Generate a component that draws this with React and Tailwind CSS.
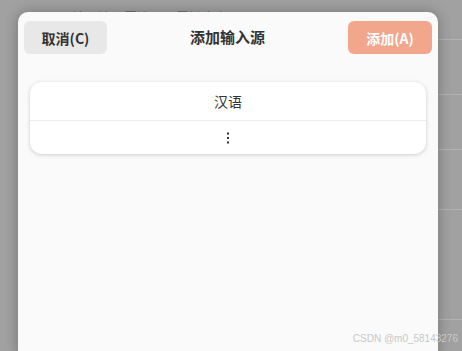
export default function App() {
  const font = { fontFamily: '"Noto Sans CJK SC", "Noto Sans", sans-serif' };
  return (
    <div className="relative w-[462px] h-[351px] overflow-hidden bg-[#a1a1a1]" style={font}>
      {/* background page behind dialog */}
      <div className="flex flex-col w-full h-full">
        <div className="h-[40px] flex">
          <div className="pl-[72px] pt-[8px] text-[13px] text-[#666] leading-[18px]">输入法设置选项配置键盘布局</div>
          <div className="flex-1 border-b border-[#b3b3b3]"></div>
        </div>
        <div className="h-[55px] ml-[430px] border-b border-[#b3b3b3]"></div>
        <div className="h-[55px] ml-[430px] border-b border-[#b3b3b3]"></div>
        <div className="h-[60px] ml-[430px] border-b border-[#b3b3b3]"></div>
        <div className="h-[110px] ml-[430px] border-b border-[#b3b3b3]"></div>
      </div>

      {/* dialog */}
      <div className="absolute left-[18px] top-[12px] w-[420px] h-[345px] rounded-t-[10px] bg-[#fafafa] shadow-[0_0_14px_rgba(0,0,0,0.28)] flex flex-col">
        <div className="flex items-center justify-between px-[6px] pt-[6px] h-[45px]">
          <button className="w-[83px] h-[33px] rounded-[6px] bg-[#e8e8e8] text-[14px] font-bold text-[#333] leading-none">
            取消(C)
          </button>
          <div className="text-[15px] font-bold text-[#333]">添加输入源</div>
          <button className="w-[84px] h-[33px] rounded-[6px] bg-[#f2a68c] text-[14px] font-bold text-white leading-none">
            添加(A)
          </button>
        </div>
        <div className="px-[12px] pt-[25px]">
          <div className="rounded-[12px] bg-white shadow-[0_1px_4px_rgba(0,0,0,0.18)] flex flex-col">
            <div className="h-[39px] flex items-center justify-center text-[14px] text-[#333] border-b border-[#ececec]">
              汉语
            </div>
            <div className="h-[33px] flex items-center justify-center">
              <svg width="4" height="12" viewBox="0 0 4 12">
                <rect x="1" y="0.5" width="2" height="2" fill="#333" />
                <rect x="1" y="5" width="2" height="2" fill="#333" />
                <rect x="1" y="9.5" width="2" height="2" fill="#333" />
              </svg>
            </div>
          </div>
        </div>
      </div>

      <div className="absolute right-[4px] top-[331px] text-[10px] text-[#c8c8c8]" style={{ fontFamily: '"Liberation Sans", Arial, sans-serif' }}>
        CSDN @m0_58143276
      </div>
    </div>
  );
}
